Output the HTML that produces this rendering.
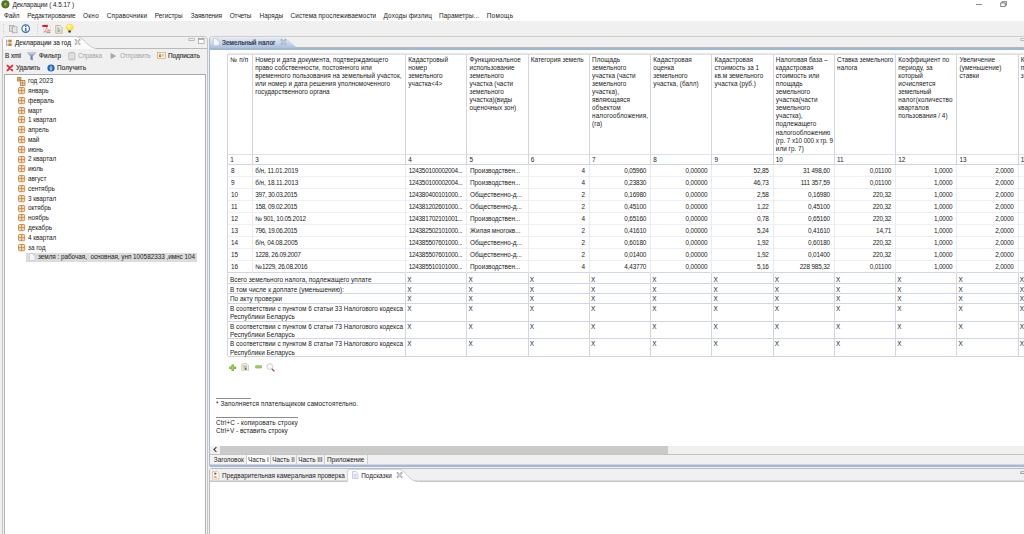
<!DOCTYPE html>
<html><head><meta charset="utf-8"><title>Декларации</title>
<style>
html,body{margin:0;padding:0;width:1024px;height:534px;overflow:hidden;background:#f0f0f0;}
#app{position:relative;width:1024px;height:534px;overflow:hidden;background:#f0f0f0;
 font-family:"Liberation Sans",sans-serif;font-size:6.4px;color:#222;}
.b{position:absolute;box-sizing:border-box;}
.t{position:absolute;white-space:pre;height:10px;line-height:10px;}
.bold{font-weight:bold;}
.dis{color:#a6a6a6;}
</style></head><body><div id="app">

<div class="b " style="left:0px;top:0px;width:1024px;height:21px;background:#fff;"></div>
<svg class="b" style="left:1px;top:0px" width="9" height="9" viewBox="0 0 9 9"><circle cx="4.4" cy="4.35" r="4.05" fill="#6e5424"/><circle cx="4.4" cy="4.3" r="3.45" fill="#2f8a30"/><path d="M3.1 2.9h2.6v2.2l-1.3 1.7l-1.3-1.7z" fill="#e8741c"/><circle cx="4.4" cy="4.1" r="0.75" fill="#dcc428"/><path d="M3.7 5.2h1.4l-.7 1.1z" fill="#e6401c"/></svg>
<div class="t" style="left:12.40px;top:0.00px;letter-spacing:-0.075px;">Декларации ( 4.5.17 )</div>
<div class="b " style="left:976.4px;top:3.5px;width:5.8px;height:0.8px;background:#8a8a8a;"></div>
<svg class="b" style="left:1000.4px;top:1.2px" width="8" height="7" viewBox="0 0 8 7"><path d="M0.7 1.9h4.5v3.6h-4.5z M1.9 1.9v-1.2h4.5v3.6h-1.2" fill="none" stroke="#555" stroke-width="0.7"/></svg>
<div class="t" style="left:4.00px;top:11.00px;letter-spacing:-0.106px;">Файл</div>
<div class="t" style="left:27.25px;top:11.00px;letter-spacing:-0.022px;">Редактирование</div>
<div class="t" style="left:83.10px;top:11.00px;letter-spacing:0.247px;">Окно</div>
<div class="t" style="left:106.75px;top:11.00px;letter-spacing:0.153px;">Справочники</div>
<div class="t" style="left:154.75px;top:11.00px;letter-spacing:0.004px;">Регистры</div>
<div class="t" style="left:190.75px;top:11.00px;letter-spacing:-0.090px;">Заявления</div>
<div class="t" style="left:229.75px;top:11.00px;letter-spacing:-0.119px;">Отчеты</div>
<div class="t" style="left:259.60px;top:11.00px;letter-spacing:0.033px;">Наряды</div>
<div class="t" style="left:290.60px;top:11.00px;letter-spacing:0.052px;">Система прослеживаемости</div>
<div class="t" style="left:383.60px;top:11.00px;letter-spacing:0.094px;">Доходы физлиц</div>
<div class="t" style="left:439.10px;top:11.00px;letter-spacing:0.045px;">Параметры...</div>
<div class="t" style="left:486.70px;top:11.00px;letter-spacing:0.323px;">Помощь</div>
<div class="b " style="left:3px;top:23.6px;width:0.9px;height:0.9px;background:#cfcfcf;"></div>
<div class="b " style="left:3px;top:25.900000000000002px;width:0.9px;height:0.9px;background:#cfcfcf;"></div>
<div class="b " style="left:3px;top:28.200000000000003px;width:0.9px;height:0.9px;background:#cfcfcf;"></div>
<div class="b " style="left:3px;top:30.5px;width:0.9px;height:0.9px;background:#cfcfcf;"></div>
<div class="b " style="left:3px;top:32.8px;width:0.9px;height:0.9px;background:#cfcfcf;"></div>
<div class="b " style="left:36.5px;top:23.6px;width:0.9px;height:0.9px;background:#cfcfcf;"></div>
<div class="b " style="left:36.5px;top:25.900000000000002px;width:0.9px;height:0.9px;background:#cfcfcf;"></div>
<div class="b " style="left:36.5px;top:28.200000000000003px;width:0.9px;height:0.9px;background:#cfcfcf;"></div>
<div class="b " style="left:36.5px;top:30.5px;width:0.9px;height:0.9px;background:#cfcfcf;"></div>
<div class="b " style="left:36.5px;top:32.8px;width:0.9px;height:0.9px;background:#cfcfcf;"></div>
<svg class="b" style="left:9px;top:24px" width="9" height="10" viewBox="0 0 9 10"><rect x="0.5" y="1.5" width="4.5" height="6" fill="#d9d9d9" stroke="#9a9a9a" stroke-width="0.6"/><rect x="3.5" y="2.8" width="4.5" height="6" fill="#e6e6e6" stroke="#9a9a9a" stroke-width="0.6"/></svg>
<svg class="b" style="left:20.9px;top:24.1px" width="9.4" height="9.4" viewBox="0 0 9.4 9.4"><circle cx="4.7" cy="4.6" r="3.75" fill="#fff" stroke="#2e6eb5" stroke-width="1.15"/><path d="M3.9 3.9h1.5v2.9h0.6v0.5h-2.4v-0.5h0.7v-2.3h-0.6z" fill="#1d4f93"/><rect x="4.1" y="2" width="1.3" height="1.2" fill="#1d4f93"/></svg>
<svg class="b" style="left:41.5px;top:24px" width="9" height="10" viewBox="0 0 9 10"><path d="M2 0.7h4.4l1.9 1.9v6.3h-6.3z" fill="#fbfbfb" stroke="#bdbdbd" stroke-width="0.5"/><rect x="4.6" y="7.6" width="3.7" height="1.3" fill="#9a9a9a"/><rect x="0.3" y="1.1" width="5.6" height="1.9" rx="0.3" fill="#dc1f26"/><path d="M2.4 8c1.4-2 2.3-3.4 2.2-4.6 .9 2 1.9 2.8 3.2 3.1-2 .1-3.6.5-5.4 1.5z" fill="none" stroke="#e0444a" stroke-width="0.55"/></svg>
<svg class="b" style="left:54.6px;top:24.5px" width="8" height="9" viewBox="0 0 8 9"><path d="M0.8 0.6h4.2l2 2v5.6h-6.2z" fill="#f7f3e6" stroke="#b39c6c" stroke-width="0.75"/><rect x="2.2" y="2.6" width="2" height="0.8" fill="#d05a5a"/><rect x="2.2" y="3.8" width="3.2" height="0.8" fill="#7fa6dc"/><rect x="2.2" y="5" width="3.2" height="0.8" fill="#7fc08a"/><rect x="2.2" y="6.2" width="3.2" height="0.8" fill="#7fa6dc"/></svg>
<svg class="b" style="left:65px;top:23.4px" width="9.4" height="10" viewBox="0 0 9.4 10"><path d="M4.6 0.3l1 1.2 1.6-.5 .1 1.6 1.6.5-.9 1.4.9 1.3-1.6.6-.3 1.3h-4.6l-.4-1.3-1.6-.6.9-1.3-.9-1.4 1.6-.5.1-1.6 1.6.5z" fill="#f8dc3c"/><circle cx="4.5" cy="3.9" r="2.7" fill="#ffe94e"/><circle cx="4" cy="3.2" r="1.3" fill="#fff9b8"/><rect x="3.3" y="7.4" width="2.6" height="2.2" rx="0.4" fill="#2e3550"/></svg>
<div class="b " style="left:2px;top:35.5px;width:205.8px;height:502.5px;border:1.1px solid #c4c4c4;border-radius:4px 4px 0 0;background:#f0f0f0;"></div>
<svg class="b" style="left:3.1px;top:36.6px" width="100" height="12" viewBox="0 0 100 12"><path d="M0 12V3Q0 0 3 0H74.5C81 0 85 11.6 95 11.6L100 12Z" fill="#fcfcfc"/><path d="M74.5 0C81 0 85 11.8 95 11.8" fill="none" stroke="#bdbdbd" stroke-width="0.8"/></svg>
<div class="b " style="left:96px;top:48.1px;width:111px;height:0.8px;background:#b9b9b9;"></div>
<svg class="b" style="left:6px;top:38.6px" width="6" height="8" viewBox="0 0 6 8"><path d="M0.7 0.5v7" stroke="#7f93b0" stroke-width="0.8"/><path d="M0.7 2.2h2M0.7 5.6h2" stroke="#7f93b0" stroke-width="0.5"/><rect x="2.4" y="0.7" width="3.2" height="2.7" fill="#c67f34"/><rect x="2.4" y="4.3" width="3.2" height="2.7" fill="#c67f34"/></svg>
<div class="t" style="left:15.00px;top:38.00px;letter-spacing:0.043px;color:#333;-webkit-text-stroke:0.12px #333;">Декларации за год</div>
<svg class="b" style="left:74.1px;top:38.3px" width="7.4" height="7.4" viewBox="0 0 7.4 7.4"><path d="M1.6 2L5.6 6M5.6 2L1.6 6" stroke="#979797" stroke-width="1.7" stroke-linecap="square" fill="none"/><path d="M1.6 2L5.6 6M5.6 2L1.6 6" stroke="#fdfdfd" stroke-width="0.8" stroke-linecap="square" fill="none"/></svg>
<svg class="b" style="left:187.5px;top:37.8px" width="8" height="4" viewBox="0 0 8 4"><rect x="0.8" y="0.8" width="5.4" height="1.8" fill="#fff" stroke="#8c8c8c" stroke-width="0.6"/></svg>
<svg class="b" style="left:197.5px;top:38px" width="8" height="7" viewBox="0 0 8 7"><rect x="0.6" y="0.6" width="5.4" height="4.8" fill="#fff" stroke="#8c8c8c" stroke-width="0.6"/><path d="M0.6 1.2h5.4" stroke="#8c8c8c" stroke-width="0.9"/></svg>
<div class="t" style="left:5.00px;top:51.00px;color:#3a3a3a;-webkit-text-stroke:0.18px #3a3a3a;">B xml</div>
<svg class="b" style="left:27.4px;top:51.8px" width="9.4" height="9" viewBox="0 0 9.4 9"><defs><linearGradient id="gf" x1="0" y1="0" x2="0" y2="1"><stop offset="0" stop-color="#b4c8ec"/><stop offset="0.5" stop-color="#7f93bd"/><stop offset="1" stop-color="#56648a"/></linearGradient></defs><path d="M0.5 0.7h8.2l-3.2 3.5v3.9l-1.8-.8v-3.1z" fill="url(#gf)" stroke="#6e82ad" stroke-width="0.45"/><path d="M1.6 1.3h6" stroke="#dde7f8" stroke-width="0.6"/></svg>
<div class="t" style="left:39.00px;top:51.00px;letter-spacing:0.106px;color:#3a3a3a;-webkit-text-stroke:0.18px #3a3a3a;">Фильтр</div>
<svg class="b" style="left:67.5px;top:51.2px" width="8" height="10" viewBox="0 0 8 10"><rect x="0.8" y="1.8" width="6" height="7" rx="0.6" fill="#e9e9e9" stroke="#a6a6a6" stroke-width="0.75"/><rect x="2.6" y="0.8" width="2.6" height="1.8" fill="#c4c4c4"/><path d="M2.4 4.5h3M2.4 6h3M2.4 7.4h3" stroke="#c0c0c0" stroke-width="0.5"/></svg>
<div class="t dis" style="left:78.00px;top:51.00px;letter-spacing:-0.180px;">Справка</div>
<svg class="b" style="left:110px;top:52px" width="7" height="8" viewBox="0 0 7 8"><path d="M0.6 0.8L6.2 4L0.6 7.2Z" fill="#a9a9a9"/></svg>
<div class="t dis" style="left:120.00px;top:51.00px;letter-spacing:-0.138px;">Отправить</div>
<svg class="b" style="left:157px;top:52px" width="9" height="7" viewBox="0 0 9 7"><rect x="0.5" y="0.5" width="7.8" height="5.8" fill="#fdf5d8" stroke="#b9a067" stroke-width="0.6"/><rect x="2.2" y="1.6" width="1.6" height="2" fill="#f0a020"/><rect x="2.2" y="3.4" width="1.6" height="1.6" fill="#d02020"/><rect x="4.6" y="2" width="2.6" height="2.6" fill="#b9cdee"/></svg>
<div class="t" style="left:168.00px;top:51.00px;letter-spacing:0.020px;color:#3a3a3a;-webkit-text-stroke:0.18px #3a3a3a;">Подписать</div>
<svg class="b" style="left:5.6px;top:63.9px" width="8" height="8" viewBox="0 0 8 8"><path d="M1.5 1.6L6.3 6.4M6.3 1.6L1.5 6.4" stroke="#e0323e" stroke-width="2" stroke-linecap="round"/></svg>
<div class="t" style="left:16.00px;top:63.00px;letter-spacing:-0.068px;color:#3a3a3a;-webkit-text-stroke:0.18px #3a3a3a;">Удалить</div>
<svg class="b" style="left:46.5px;top:64px" width="8" height="8" viewBox="0 0 8 8"><circle cx="4" cy="4" r="3.6" fill="#1660b6"/><circle cx="4" cy="3.4" r="2.5" fill="#2272c8"/><path d="M4 1.9v2.4M3 3.6L4 4.8L5 3.6M2.7 5.9h2.6" stroke="#fff" stroke-width="0.75" fill="none"/></svg>
<div class="t" style="left:57.00px;top:63.00px;letter-spacing:0.129px;color:#3a3a3a;-webkit-text-stroke:0.18px #3a3a3a;">Получить</div>
<div class="b " style="left:4px;top:74.2px;width:202.2px;height:470px;background:#fff;border:1px solid #b4b4b4;border-top:1.3px solid #a9a9a9;"></div>
<svg class="b" style="left:17px;top:76.5px" width="9" height="9" viewBox="0 0 9 9"><rect x="0.4" y="0.4" width="3.6" height="3.6" fill="#f0c896" stroke="#b06a2c" stroke-width="0.6"/><path d="M2.2 0.4v3.6M0.4 2.2h3.6" stroke="#b06a2c" stroke-width="0.5"/><rect x="3.2" y="3.6" width="4.8" height="4.8" fill="#f6d9b4" stroke="#b06a2c" stroke-width="0.7"/><path d="M5.6 3.6v4.8M3.2 6h4.8" stroke="#b06a2c" stroke-width="0.6"/></svg>
<div class="t" style="left:28.00px;top:76.00px;letter-spacing:-0.040px;">год 2023</div>
<svg class="b" style="left:18px;top:87.086px" width="8" height="8" viewBox="0 0 8 8"><rect x="0.5" y="0.5" width="6.2" height="6.2" rx="1" fill="#f6d9b4" stroke="#c07a36" stroke-width="0.8"/><path d="M3.6 0.5v6.2M0.5 3.6h6.2" stroke="#c07a36" stroke-width="0.7"/></svg>
<div class="t" style="left:28.00px;top:86.00px;letter-spacing:-0.040px;">январь</div>
<svg class="b" style="left:18px;top:96.872px" width="8" height="8" viewBox="0 0 8 8"><rect x="0.5" y="0.5" width="6.2" height="6.2" rx="1" fill="#f6d9b4" stroke="#c07a36" stroke-width="0.8"/><path d="M3.6 0.5v6.2M0.5 3.6h6.2" stroke="#c07a36" stroke-width="0.7"/></svg>
<div class="t" style="left:28.00px;top:96.00px;letter-spacing:-0.040px;">февраль</div>
<svg class="b" style="left:18px;top:106.658px" width="8" height="8" viewBox="0 0 8 8"><rect x="0.5" y="0.5" width="6.2" height="6.2" rx="1" fill="#f6d9b4" stroke="#c07a36" stroke-width="0.8"/><path d="M3.6 0.5v6.2M0.5 3.6h6.2" stroke="#c07a36" stroke-width="0.7"/></svg>
<div class="t" style="left:28.00px;top:106.00px;letter-spacing:-0.040px;">март</div>
<svg class="b" style="left:18px;top:116.444px" width="8" height="8" viewBox="0 0 8 8"><rect x="0.5" y="0.5" width="6.2" height="6.2" rx="1" fill="#f6d9b4" stroke="#c07a36" stroke-width="0.8"/><path d="M3.6 0.5v6.2M0.5 3.6h6.2" stroke="#c07a36" stroke-width="0.7"/></svg>
<div class="t" style="left:28.00px;top:115.00px;letter-spacing:-0.040px;">1 квартал</div>
<svg class="b" style="left:18px;top:126.23px" width="8" height="8" viewBox="0 0 8 8"><rect x="0.5" y="0.5" width="6.2" height="6.2" rx="1" fill="#f6d9b4" stroke="#c07a36" stroke-width="0.8"/><path d="M3.6 0.5v6.2M0.5 3.6h6.2" stroke="#c07a36" stroke-width="0.7"/></svg>
<div class="t" style="left:28.00px;top:125.00px;letter-spacing:-0.040px;">апрель</div>
<svg class="b" style="left:18px;top:136.01599999999996px" width="8" height="8" viewBox="0 0 8 8"><rect x="0.5" y="0.5" width="6.2" height="6.2" rx="1" fill="#f6d9b4" stroke="#c07a36" stroke-width="0.8"/><path d="M3.6 0.5v6.2M0.5 3.6h6.2" stroke="#c07a36" stroke-width="0.7"/></svg>
<div class="t" style="left:28.00px;top:135.00px;letter-spacing:-0.040px;">май</div>
<svg class="b" style="left:18px;top:145.80199999999996px" width="8" height="8" viewBox="0 0 8 8"><rect x="0.5" y="0.5" width="6.2" height="6.2" rx="1" fill="#f6d9b4" stroke="#c07a36" stroke-width="0.8"/><path d="M3.6 0.5v6.2M0.5 3.6h6.2" stroke="#c07a36" stroke-width="0.7"/></svg>
<div class="t" style="left:28.00px;top:145.00px;letter-spacing:-0.040px;">июнь</div>
<svg class="b" style="left:18px;top:155.58799999999997px" width="8" height="8" viewBox="0 0 8 8"><rect x="0.5" y="0.5" width="6.2" height="6.2" rx="1" fill="#f6d9b4" stroke="#c07a36" stroke-width="0.8"/><path d="M3.6 0.5v6.2M0.5 3.6h6.2" stroke="#c07a36" stroke-width="0.7"/></svg>
<div class="t" style="left:28.00px;top:154.00px;letter-spacing:-0.040px;">2 квартал</div>
<svg class="b" style="left:18px;top:165.37399999999997px" width="8" height="8" viewBox="0 0 8 8"><rect x="0.5" y="0.5" width="6.2" height="6.2" rx="1" fill="#f6d9b4" stroke="#c07a36" stroke-width="0.8"/><path d="M3.6 0.5v6.2M0.5 3.6h6.2" stroke="#c07a36" stroke-width="0.7"/></svg>
<div class="t" style="left:28.00px;top:164.00px;letter-spacing:-0.040px;">июль</div>
<svg class="b" style="left:18px;top:175.15999999999997px" width="8" height="8" viewBox="0 0 8 8"><rect x="0.5" y="0.5" width="6.2" height="6.2" rx="1" fill="#f6d9b4" stroke="#c07a36" stroke-width="0.8"/><path d="M3.6 0.5v6.2M0.5 3.6h6.2" stroke="#c07a36" stroke-width="0.7"/></svg>
<div class="t" style="left:28.00px;top:174.00px;letter-spacing:-0.040px;">август</div>
<svg class="b" style="left:18px;top:184.94599999999997px" width="8" height="8" viewBox="0 0 8 8"><rect x="0.5" y="0.5" width="6.2" height="6.2" rx="1" fill="#f6d9b4" stroke="#c07a36" stroke-width="0.8"/><path d="M3.6 0.5v6.2M0.5 3.6h6.2" stroke="#c07a36" stroke-width="0.7"/></svg>
<div class="t" style="left:28.00px;top:184.00px;letter-spacing:-0.040px;">сентябрь</div>
<svg class="b" style="left:18px;top:194.73199999999997px" width="8" height="8" viewBox="0 0 8 8"><rect x="0.5" y="0.5" width="6.2" height="6.2" rx="1" fill="#f6d9b4" stroke="#c07a36" stroke-width="0.8"/><path d="M3.6 0.5v6.2M0.5 3.6h6.2" stroke="#c07a36" stroke-width="0.7"/></svg>
<div class="t" style="left:28.00px;top:194.00px;letter-spacing:-0.040px;">3 квартал</div>
<svg class="b" style="left:18px;top:204.51799999999997px" width="8" height="8" viewBox="0 0 8 8"><rect x="0.5" y="0.5" width="6.2" height="6.2" rx="1" fill="#f6d9b4" stroke="#c07a36" stroke-width="0.8"/><path d="M3.6 0.5v6.2M0.5 3.6h6.2" stroke="#c07a36" stroke-width="0.7"/></svg>
<div class="t" style="left:28.00px;top:203.00px;letter-spacing:-0.040px;">октябрь</div>
<svg class="b" style="left:18px;top:214.30399999999997px" width="8" height="8" viewBox="0 0 8 8"><rect x="0.5" y="0.5" width="6.2" height="6.2" rx="1" fill="#f6d9b4" stroke="#c07a36" stroke-width="0.8"/><path d="M3.6 0.5v6.2M0.5 3.6h6.2" stroke="#c07a36" stroke-width="0.7"/></svg>
<div class="t" style="left:28.00px;top:213.00px;letter-spacing:-0.040px;">ноябрь</div>
<svg class="b" style="left:18px;top:224.08999999999997px" width="8" height="8" viewBox="0 0 8 8"><rect x="0.5" y="0.5" width="6.2" height="6.2" rx="1" fill="#f6d9b4" stroke="#c07a36" stroke-width="0.8"/><path d="M3.6 0.5v6.2M0.5 3.6h6.2" stroke="#c07a36" stroke-width="0.7"/></svg>
<div class="t" style="left:28.00px;top:223.00px;letter-spacing:-0.040px;">декабрь</div>
<svg class="b" style="left:18px;top:233.87599999999998px" width="8" height="8" viewBox="0 0 8 8"><rect x="0.5" y="0.5" width="6.2" height="6.2" rx="1" fill="#f6d9b4" stroke="#c07a36" stroke-width="0.8"/><path d="M3.6 0.5v6.2M0.5 3.6h6.2" stroke="#c07a36" stroke-width="0.7"/></svg>
<div class="t" style="left:28.00px;top:233.00px;letter-spacing:-0.040px;">4 квартал</div>
<svg class="b" style="left:18px;top:243.66199999999998px" width="8" height="8" viewBox="0 0 8 8"><rect x="0.5" y="0.5" width="6.2" height="6.2" rx="1" fill="#f6d9b4" stroke="#c07a36" stroke-width="0.8"/><path d="M3.6 0.5v6.2M0.5 3.6h6.2" stroke="#c07a36" stroke-width="0.7"/></svg>
<div class="t" style="left:28.00px;top:243.00px;letter-spacing:-0.040px;">за год</div>
<div class="b " style="left:26px;top:252.748px;width:170.5px;height:9px;background:#dcdcdc;"></div>
<svg class="b" style="left:28.5px;top:253.44799999999998px" width="7" height="8" viewBox="0 0 7 8"><path d="M0.5 0.5h3.6l1.9 1.9v5.1h-5.5z" fill="#f4f6fb" stroke="#b8c4dc" stroke-width="0.6"/><path d="M4.1 0.5v1.9h1.9" fill="#dce6f5" stroke="#b8c4dc" stroke-width="0.4"/></svg>
<div class="t" style="left:38.00px;top:252.00px;letter-spacing:-0.043px;">земля : рабочая,  основная, унп 100582333 ,имнс 104</div>
<div class="b " style="left:209px;top:35.5px;width:830px;height:430.7px;border:1px solid #a9b9d0;border-top:1.2px solid #cfcfcf;border-radius:4px 0 0 0;background:#fff;"></div>
<div class="b " style="left:210px;top:36.7px;width:830px;height:11.3px;background:#f0f0f0;border-radius:3px 0 0 0;border-bottom:0.5px solid #b8b8b8;"></div>
<svg class="b" style="left:210px;top:36.5px" width="100" height="13.4" viewBox="0 0 100 13.4"><defs><linearGradient id="g1" x1="0" y1="0" x2="0" y2="1"><stop offset="0" stop-color="#e6edf6"/><stop offset="0.45" stop-color="#c9d7ea"/><stop offset="1" stop-color="#9ab4d5"/></linearGradient></defs><path d="M0 13.4V3Q0 0 3 0H72.5C79 0 83 12 93 12H100V13.4Z" fill="url(#g1)"/></svg>
<div class="b " style="left:210px;top:48.3px;width:830px;height:1.55px;background:#9db7d7;"></div>
<svg class="b" style="left:212.8px;top:38.4px" width="7" height="8" viewBox="0 0 7 8"><path d="M0.5 0.5h3.6l1.9 1.9v5.1h-5.5z" fill="#f3f6fb" stroke="#b9c6dc" stroke-width="0.6"/><path d="M4.1 0.5v1.9h1.9z" fill="#f2e2a8" stroke="#c9bf94" stroke-width="0.4"/></svg>
<div class="t" style="left:222.00px;top:38.00px;letter-spacing:0.068px;color:#2f3440;-webkit-text-stroke:0.2px #2f3440;">Земельный налог</div>
<svg class="b" style="left:279.5px;top:38.4px" width="7.4" height="7.4" viewBox="0 0 7.4 7.4"><path d="M1.6 2L5.6 6M5.6 2L1.6 6" stroke="#8a94a4" stroke-width="1.7" stroke-linecap="square" fill="none"/><path d="M1.6 2L5.6 6M5.6 2L1.6 6" stroke="#f4f7fb" stroke-width="0.8" stroke-linecap="square" fill="none"/></svg>
<svg class="b" style="left:1020.2px;top:37.8px" width="8" height="4" viewBox="0 0 8 4"><rect x="0.8" y="0.8" width="5.4" height="1.8" fill="#fff" stroke="#8c8c8c" stroke-width="0.6"/></svg>
<div class="b " style="left:227.5px;top:53.1px;width:800px;height:1.6px;background:#e0e4eb;"></div>
<div class="b " style="left:227.5px;top:154.3px;width:800px;height:1.0px;background:#dde2ea;"></div>
<div class="b " style="left:227.5px;top:164.0px;width:800px;height:1.0px;background:#d0d6e3;"></div>
<div class="b " style="left:227.5px;top:176.0px;width:800px;height:1.0px;background:#eef0f5;"></div>
<div class="b " style="left:227.5px;top:188.0px;width:800px;height:1.0px;background:#eef0f5;"></div>
<div class="b " style="left:227.5px;top:200.0px;width:800px;height:1.0px;background:#eef0f5;"></div>
<div class="b " style="left:227.5px;top:212.0px;width:800px;height:1.0px;background:#eef0f5;"></div>
<div class="b " style="left:227.5px;top:224.0px;width:800px;height:1.0px;background:#eef0f5;"></div>
<div class="b " style="left:227.5px;top:236.0px;width:800px;height:1.0px;background:#eef0f5;"></div>
<div class="b " style="left:227.5px;top:248.0px;width:800px;height:1.0px;background:#eef0f5;"></div>
<div class="b " style="left:227.5px;top:260.0px;width:800px;height:1.0px;background:#eef0f5;"></div>
<div class="b " style="left:227.5px;top:272.0px;width:800px;height:1.0px;background:#d0d6e3;"></div>
<div class="b " style="left:227.5px;top:282.9px;width:800px;height:1.0px;background:#d0d6e3;"></div>
<div class="b " style="left:227.5px;top:292.9px;width:800px;height:1.0px;background:#d0d6e3;"></div>
<div class="b " style="left:227.5px;top:302.9px;width:800px;height:1.0px;background:#d0d6e3;"></div>
<div class="b " style="left:227.5px;top:320.6px;width:800px;height:1.0px;background:#d0d6e3;"></div>
<div class="b " style="left:227.5px;top:338.2px;width:800px;height:1.0px;background:#d0d6e3;"></div>
<div class="b " style="left:227.5px;top:355.9px;width:800px;height:1.0px;background:#d0d6e3;"></div>
<div class="b " style="left:227.0px;top:53.5px;width:1.0px;height:302.9px;background:#d0d6e3;"></div>
<div class="b " style="left:252.0px;top:53.5px;width:1.0px;height:111.0px;background:#d0d6e3;"></div>
<div class="b " style="left:252.0px;top:164.5px;width:1.0px;height:108.0px;background:#e9ecf2;"></div>
<div class="b " style="left:405.1px;top:53.5px;width:1.0px;height:111.0px;background:#d0d6e3;"></div>
<div class="b " style="left:405.1px;top:164.5px;width:1.0px;height:108.0px;background:#e9ecf2;"></div>
<div class="b " style="left:405.1px;top:272.5px;width:1.0px;height:83.89999999999998px;background:#d0d6e3;"></div>
<div class="b " style="left:466.4px;top:53.5px;width:1.0px;height:111.0px;background:#d0d6e3;"></div>
<div class="b " style="left:466.4px;top:164.5px;width:1.0px;height:108.0px;background:#e9ecf2;"></div>
<div class="b " style="left:466.4px;top:272.5px;width:1.0px;height:83.89999999999998px;background:#d0d6e3;"></div>
<div class="b " style="left:527.6px;top:53.5px;width:1.0px;height:111.0px;background:#d0d6e3;"></div>
<div class="b " style="left:527.6px;top:164.5px;width:1.0px;height:108.0px;background:#e9ecf2;"></div>
<div class="b " style="left:527.6px;top:272.5px;width:1.0px;height:83.89999999999998px;background:#d0d6e3;"></div>
<div class="b " style="left:588.9px;top:53.5px;width:1.0px;height:111.0px;background:#d0d6e3;"></div>
<div class="b " style="left:588.9px;top:164.5px;width:1.0px;height:108.0px;background:#e9ecf2;"></div>
<div class="b " style="left:588.9px;top:272.5px;width:1.0px;height:83.89999999999998px;background:#d0d6e3;"></div>
<div class="b " style="left:650.1px;top:53.5px;width:1.0px;height:111.0px;background:#d0d6e3;"></div>
<div class="b " style="left:650.1px;top:164.5px;width:1.0px;height:108.0px;background:#e9ecf2;"></div>
<div class="b " style="left:650.1px;top:272.5px;width:1.0px;height:83.89999999999998px;background:#d0d6e3;"></div>
<div class="b " style="left:711.4px;top:53.5px;width:1.0px;height:111.0px;background:#d0d6e3;"></div>
<div class="b " style="left:711.4px;top:164.5px;width:1.0px;height:108.0px;background:#e9ecf2;"></div>
<div class="b " style="left:711.4px;top:272.5px;width:1.0px;height:83.89999999999998px;background:#d0d6e3;"></div>
<div class="b " style="left:772.6px;top:53.5px;width:1.0px;height:111.0px;background:#d0d6e3;"></div>
<div class="b " style="left:772.6px;top:164.5px;width:1.0px;height:108.0px;background:#e9ecf2;"></div>
<div class="b " style="left:772.6px;top:272.5px;width:1.0px;height:83.89999999999998px;background:#d0d6e3;"></div>
<div class="b " style="left:833.9px;top:53.5px;width:1.0px;height:111.0px;background:#d0d6e3;"></div>
<div class="b " style="left:833.9px;top:164.5px;width:1.0px;height:108.0px;background:#e9ecf2;"></div>
<div class="b " style="left:833.9px;top:272.5px;width:1.0px;height:83.89999999999998px;background:#d0d6e3;"></div>
<div class="b " style="left:895.1px;top:53.5px;width:1.0px;height:111.0px;background:#d0d6e3;"></div>
<div class="b " style="left:895.1px;top:164.5px;width:1.0px;height:108.0px;background:#e9ecf2;"></div>
<div class="b " style="left:895.1px;top:272.5px;width:1.0px;height:83.89999999999998px;background:#d0d6e3;"></div>
<div class="b " style="left:956.4px;top:53.5px;width:1.0px;height:111.0px;background:#d0d6e3;"></div>
<div class="b " style="left:956.4px;top:164.5px;width:1.0px;height:108.0px;background:#e9ecf2;"></div>
<div class="b " style="left:956.4px;top:272.5px;width:1.0px;height:83.89999999999998px;background:#d0d6e3;"></div>
<div class="b " style="left:1017.6px;top:53.5px;width:1.0px;height:111.0px;background:#d0d6e3;"></div>
<div class="b " style="left:1017.6px;top:164.5px;width:1.0px;height:108.0px;background:#e9ecf2;"></div>
<div class="b " style="left:1017.6px;top:272.5px;width:1.0px;height:83.89999999999998px;background:#d0d6e3;"></div>
<div class="t" style="left:230.20px;top:55.00px;letter-spacing:0.168px;">№ п/п</div>
<div class="t" style="left:255.20px;top:55.00px;letter-spacing:0.036px;">Номер и дата документа, подтверждающего</div>
<div class="t" style="left:255.20px;top:63.00px;letter-spacing:0.030px;">право собственности, постоянного или</div>
<div class="t" style="left:255.20px;top:71.00px;letter-spacing:0.057px;">временного пользования на земельный участок,</div>
<div class="t" style="left:255.20px;top:79.00px;letter-spacing:0.030px;">или номер и дата решения уполномоченного</div>
<div class="t" style="left:255.20px;top:87.00px;letter-spacing:0.030px;">государственного органа</div>
<div class="t" style="left:408.30px;top:55.00px;letter-spacing:0.030px;">Кадастровый</div>
<div class="t" style="left:408.30px;top:63.00px;letter-spacing:0.030px;">номер</div>
<div class="t" style="left:408.30px;top:71.00px;letter-spacing:0.030px;">земельного</div>
<div class="t" style="left:408.30px;top:79.00px;letter-spacing:0.030px;">участка&lt;4&gt;</div>
<div class="t" style="left:469.60px;top:55.00px;letter-spacing:0.104px;">Функциональное</div>
<div class="t" style="left:469.60px;top:63.00px;letter-spacing:0.030px;">использование</div>
<div class="t" style="left:469.60px;top:71.00px;letter-spacing:0.030px;">земельного</div>
<div class="t" style="left:469.60px;top:79.00px;letter-spacing:0.030px;">участка (части</div>
<div class="t" style="left:469.60px;top:87.00px;letter-spacing:0.030px;">земельного</div>
<div class="t" style="left:469.60px;top:95.00px;letter-spacing:0.030px;">участка)(виды</div>
<div class="t" style="left:469.60px;top:103.00px;letter-spacing:0.030px;">оценочных зон)</div>
<div class="t" style="left:530.80px;top:55.00px;">Категория земель</div>
<div class="t" style="left:592.10px;top:55.00px;letter-spacing:0.030px;">Площадь</div>
<div class="t" style="left:592.10px;top:63.00px;letter-spacing:0.030px;">земельного</div>
<div class="t" style="left:592.10px;top:71.00px;letter-spacing:0.030px;">участка (части</div>
<div class="t" style="left:592.10px;top:79.00px;letter-spacing:0.030px;">земельного</div>
<div class="t" style="left:592.10px;top:87.00px;letter-spacing:0.030px;">участка),</div>
<div class="t" style="left:592.10px;top:95.00px;letter-spacing:0.030px;">являющаяся</div>
<div class="t" style="left:592.10px;top:103.00px;letter-spacing:0.030px;">объектом</div>
<div class="t" style="left:592.10px;top:111.00px;letter-spacing:0.096px;">налогообложения,</div>
<div class="t" style="left:592.10px;top:119.00px;letter-spacing:0.030px;">(га)</div>
<div class="t" style="left:653.30px;top:55.00px;letter-spacing:0.030px;">Кадастровая</div>
<div class="t" style="left:653.30px;top:63.00px;letter-spacing:0.030px;">оценка</div>
<div class="t" style="left:653.30px;top:71.00px;letter-spacing:0.030px;">земельного</div>
<div class="t" style="left:653.30px;top:79.00px;letter-spacing:0.030px;">участка, (балл)</div>
<div class="t" style="left:714.60px;top:55.00px;letter-spacing:0.030px;">Кадастровая</div>
<div class="t" style="left:714.60px;top:63.00px;letter-spacing:0.030px;">стоимость за 1</div>
<div class="t" style="left:714.60px;top:71.00px;letter-spacing:0.030px;">кв.м земельного</div>
<div class="t" style="left:714.60px;top:79.00px;letter-spacing:0.030px;">участка (руб.)</div>
<div class="t" style="left:775.80px;top:55.00px;letter-spacing:-0.030px;">Налоговая база –</div>
<div class="t" style="left:775.80px;top:63.00px;letter-spacing:0.030px;">кадастровая</div>
<div class="t" style="left:775.80px;top:71.00px;letter-spacing:0.030px;">стоимость или</div>
<div class="t" style="left:775.80px;top:79.00px;letter-spacing:0.030px;">площадь</div>
<div class="t" style="left:775.80px;top:87.00px;letter-spacing:0.030px;">земельного</div>
<div class="t" style="left:775.80px;top:95.00px;letter-spacing:0.030px;">участка(части</div>
<div class="t" style="left:775.80px;top:103.00px;letter-spacing:0.030px;">земельного</div>
<div class="t" style="left:775.80px;top:111.00px;letter-spacing:0.030px;">участка),</div>
<div class="t" style="left:775.80px;top:119.00px;letter-spacing:0.030px;">подлежащего</div>
<div class="t" style="left:775.80px;top:128.00px;letter-spacing:0.030px;">налогообложению</div>
<div class="t" style="left:775.80px;top:136.00px;letter-spacing:-0.104px;">(гр. 7 х10 000 х гр. 9</div>
<div class="t" style="left:775.80px;top:144.00px;letter-spacing:0.030px;">или гр. 7)</div>
<div class="t" style="left:837.10px;top:55.00px;letter-spacing:-0.027px;">Ставка земельного</div>
<div class="t" style="left:837.10px;top:63.00px;letter-spacing:0.030px;">налога</div>
<div class="t" style="left:898.30px;top:55.00px;letter-spacing:0.030px;">Коэффициент по</div>
<div class="t" style="left:898.30px;top:63.00px;letter-spacing:0.030px;">периоду, за</div>
<div class="t" style="left:898.30px;top:71.00px;letter-spacing:0.030px;">который</div>
<div class="t" style="left:898.30px;top:79.00px;letter-spacing:0.030px;">исчисляется</div>
<div class="t" style="left:898.30px;top:87.00px;letter-spacing:0.030px;">земельный</div>
<div class="t" style="left:898.30px;top:95.00px;letter-spacing:0.122px;">налог(количество</div>
<div class="t" style="left:898.30px;top:103.00px;letter-spacing:0.030px;">кварталов</div>
<div class="t" style="left:898.30px;top:111.00px;letter-spacing:0.030px;">пользования / 4)</div>
<div class="t" style="left:959.60px;top:55.00px;letter-spacing:0.030px;">Увеличение</div>
<div class="t" style="left:959.60px;top:63.00px;letter-spacing:0.030px;">(уменьшение)</div>
<div class="t" style="left:959.60px;top:71.00px;letter-spacing:0.030px;">ставки</div>
<div class="t" style="left:1020.80px;top:55.00px;letter-spacing:0.030px;">К</div>
<div class="t" style="left:1020.80px;top:63.00px;letter-spacing:0.030px;">п</div>
<div class="t" style="left:1020.80px;top:71.00px;letter-spacing:0.030px;">з</div>
<div class="t" style="left:230.20px;top:155.00px;letter-spacing:-0.100px;">1</div>
<div class="t" style="left:255.20px;top:155.00px;letter-spacing:-0.100px;">3</div>
<div class="t" style="left:408.30px;top:155.00px;letter-spacing:-0.100px;">4</div>
<div class="t" style="left:469.60px;top:155.00px;letter-spacing:-0.100px;">5</div>
<div class="t" style="left:530.80px;top:155.00px;letter-spacing:-0.100px;">6</div>
<div class="t" style="left:592.10px;top:155.00px;letter-spacing:-0.100px;">7</div>
<div class="t" style="left:653.30px;top:155.00px;letter-spacing:-0.100px;">8</div>
<div class="t" style="left:714.60px;top:155.00px;letter-spacing:-0.100px;">9</div>
<div class="t" style="left:775.80px;top:155.00px;letter-spacing:-0.100px;">10</div>
<div class="t" style="left:837.10px;top:155.00px;letter-spacing:-0.100px;">11</div>
<div class="t" style="left:898.30px;top:155.00px;letter-spacing:-0.100px;">12</div>
<div class="t" style="left:959.60px;top:155.00px;letter-spacing:-0.100px;">13</div>
<div class="t" style="left:1020.80px;top:155.00px;letter-spacing:-0.100px;">1</div>
<div class="t" style="left:231.00px;top:166.00px;letter-spacing:-0.100px;">8</div>
<div class="t" style="left:255.30px;top:166.00px;letter-spacing:-0.081px;">б/н, 11.01.2019</div>
<div class="t" style="left:408.80px;top:166.00px;letter-spacing:-0.285px;">124350100002004...</div>
<div class="t" style="left:470.00px;top:166.00px;letter-spacing:-0.020px;">Производствен...</div>
<div class="t" style="left:528.10px;top:166.00px;width:56.90px;text-align:right;letter-spacing:-0.170px;">4</div>
<div class="t" style="left:589.40px;top:166.00px;width:56.80px;text-align:right;letter-spacing:-0.170px;">0,05960</div>
<div class="t" style="left:650.60px;top:166.00px;width:56.90px;text-align:right;letter-spacing:-0.170px;">0,00000</div>
<div class="t" style="left:711.90px;top:166.00px;width:56.80px;text-align:right;letter-spacing:-0.170px;">52,85</div>
<div class="t" style="left:773.10px;top:166.00px;width:56.90px;text-align:right;letter-spacing:-0.170px;">31 498,60</div>
<div class="t" style="left:834.40px;top:166.00px;width:56.80px;text-align:right;letter-spacing:-0.170px;">0,01100</div>
<div class="t" style="left:895.60px;top:166.00px;width:56.90px;text-align:right;letter-spacing:-0.170px;">1,0000</div>
<div class="t" style="left:956.90px;top:166.00px;width:56.80px;text-align:right;letter-spacing:-0.170px;">2,0000</div>
<div class="t" style="left:231.00px;top:178.00px;letter-spacing:-0.100px;">9</div>
<div class="t" style="left:255.30px;top:178.00px;letter-spacing:-0.081px;">б/н, 18.11.2013</div>
<div class="t" style="left:408.80px;top:178.00px;letter-spacing:-0.285px;">124350100002004...</div>
<div class="t" style="left:470.00px;top:178.00px;letter-spacing:-0.020px;">Производствен...</div>
<div class="t" style="left:528.10px;top:178.00px;width:56.90px;text-align:right;letter-spacing:-0.170px;">4</div>
<div class="t" style="left:589.40px;top:178.00px;width:56.80px;text-align:right;letter-spacing:-0.170px;">0,23830</div>
<div class="t" style="left:650.60px;top:178.00px;width:56.90px;text-align:right;letter-spacing:-0.170px;">0,00000</div>
<div class="t" style="left:711.90px;top:178.00px;width:56.80px;text-align:right;letter-spacing:-0.170px;">46,73</div>
<div class="t" style="left:773.10px;top:178.00px;width:56.90px;text-align:right;letter-spacing:-0.170px;">111 357,59</div>
<div class="t" style="left:834.40px;top:178.00px;width:56.80px;text-align:right;letter-spacing:-0.170px;">0,01100</div>
<div class="t" style="left:895.60px;top:178.00px;width:56.90px;text-align:right;letter-spacing:-0.170px;">1,0000</div>
<div class="t" style="left:956.90px;top:178.00px;width:56.80px;text-align:right;letter-spacing:-0.170px;">2,0000</div>
<div class="t" style="left:231.00px;top:190.00px;letter-spacing:-0.100px;">10</div>
<div class="t" style="left:255.30px;top:190.00px;letter-spacing:-0.307px;">397, 30.03.2015</div>
<div class="t" style="left:408.80px;top:190.00px;letter-spacing:-0.285px;">124380400101000...</div>
<div class="t" style="left:470.00px;top:190.00px;letter-spacing:-0.020px;">Общественно-д...</div>
<div class="t" style="left:528.10px;top:190.00px;width:56.90px;text-align:right;letter-spacing:-0.170px;">2</div>
<div class="t" style="left:589.40px;top:190.00px;width:56.80px;text-align:right;letter-spacing:-0.170px;">0,16980</div>
<div class="t" style="left:650.60px;top:190.00px;width:56.90px;text-align:right;letter-spacing:-0.170px;">0,00000</div>
<div class="t" style="left:711.90px;top:190.00px;width:56.80px;text-align:right;letter-spacing:-0.170px;">2,58</div>
<div class="t" style="left:773.10px;top:190.00px;width:56.90px;text-align:right;letter-spacing:-0.170px;">0,16980</div>
<div class="t" style="left:834.40px;top:190.00px;width:56.80px;text-align:right;letter-spacing:-0.170px;">220,32</div>
<div class="t" style="left:895.60px;top:190.00px;width:56.90px;text-align:right;letter-spacing:-0.170px;">1,0000</div>
<div class="t" style="left:956.90px;top:190.00px;width:56.80px;text-align:right;letter-spacing:-0.170px;">2,0000</div>
<div class="t" style="left:231.00px;top:202.00px;letter-spacing:-0.100px;">11</div>
<div class="t" style="left:255.30px;top:202.00px;letter-spacing:-0.300px;">158, 09.02.2015</div>
<div class="t" style="left:408.80px;top:202.00px;letter-spacing:-0.285px;">124381202601000...</div>
<div class="t" style="left:470.00px;top:202.00px;letter-spacing:-0.020px;">Общественно-д...</div>
<div class="t" style="left:528.10px;top:202.00px;width:56.90px;text-align:right;letter-spacing:-0.170px;">2</div>
<div class="t" style="left:589.40px;top:202.00px;width:56.80px;text-align:right;letter-spacing:-0.170px;">0,45100</div>
<div class="t" style="left:650.60px;top:202.00px;width:56.90px;text-align:right;letter-spacing:-0.170px;">0,00000</div>
<div class="t" style="left:711.90px;top:202.00px;width:56.80px;text-align:right;letter-spacing:-0.170px;">1,22</div>
<div class="t" style="left:773.10px;top:202.00px;width:56.90px;text-align:right;letter-spacing:-0.170px;">0,45100</div>
<div class="t" style="left:834.40px;top:202.00px;width:56.80px;text-align:right;letter-spacing:-0.170px;">220,32</div>
<div class="t" style="left:895.60px;top:202.00px;width:56.90px;text-align:right;letter-spacing:-0.170px;">1,0000</div>
<div class="t" style="left:956.90px;top:202.00px;width:56.80px;text-align:right;letter-spacing:-0.170px;">2,0000</div>
<div class="t" style="left:231.00px;top:214.00px;letter-spacing:-0.100px;">12</div>
<div class="t" style="left:255.30px;top:214.00px;letter-spacing:-0.253px;">№ 901, 10.05.2012</div>
<div class="t" style="left:408.80px;top:214.00px;letter-spacing:-0.285px;">124381702101001...</div>
<div class="t" style="left:470.00px;top:214.00px;letter-spacing:-0.020px;">Производствен...</div>
<div class="t" style="left:528.10px;top:214.00px;width:56.90px;text-align:right;letter-spacing:-0.170px;">4</div>
<div class="t" style="left:589.40px;top:214.00px;width:56.80px;text-align:right;letter-spacing:-0.170px;">0,65160</div>
<div class="t" style="left:650.60px;top:214.00px;width:56.90px;text-align:right;letter-spacing:-0.170px;">0,00000</div>
<div class="t" style="left:711.90px;top:214.00px;width:56.80px;text-align:right;letter-spacing:-0.170px;">0,78</div>
<div class="t" style="left:773.10px;top:214.00px;width:56.90px;text-align:right;letter-spacing:-0.170px;">0,65160</div>
<div class="t" style="left:834.40px;top:214.00px;width:56.80px;text-align:right;letter-spacing:-0.170px;">220,32</div>
<div class="t" style="left:895.60px;top:214.00px;width:56.90px;text-align:right;letter-spacing:-0.170px;">1,0000</div>
<div class="t" style="left:956.90px;top:214.00px;width:56.80px;text-align:right;letter-spacing:-0.170px;">2,0000</div>
<div class="t" style="left:231.00px;top:226.00px;letter-spacing:-0.100px;">13</div>
<div class="t" style="left:255.30px;top:226.00px;letter-spacing:-0.300px;">796, 19.06.2015</div>
<div class="t" style="left:408.80px;top:226.00px;letter-spacing:-0.285px;">124382502101000...</div>
<div class="t" style="left:470.00px;top:226.00px;letter-spacing:-0.020px;">Жилая многокв...</div>
<div class="t" style="left:528.10px;top:226.00px;width:56.90px;text-align:right;letter-spacing:-0.170px;">2</div>
<div class="t" style="left:589.40px;top:226.00px;width:56.80px;text-align:right;letter-spacing:-0.170px;">0,41610</div>
<div class="t" style="left:650.60px;top:226.00px;width:56.90px;text-align:right;letter-spacing:-0.170px;">0,00000</div>
<div class="t" style="left:711.90px;top:226.00px;width:56.80px;text-align:right;letter-spacing:-0.170px;">5,24</div>
<div class="t" style="left:773.10px;top:226.00px;width:56.90px;text-align:right;letter-spacing:-0.170px;">0,41610</div>
<div class="t" style="left:834.40px;top:226.00px;width:56.80px;text-align:right;letter-spacing:-0.170px;">14,71</div>
<div class="t" style="left:895.60px;top:226.00px;width:56.90px;text-align:right;letter-spacing:-0.170px;">1,0000</div>
<div class="t" style="left:956.90px;top:226.00px;width:56.80px;text-align:right;letter-spacing:-0.170px;">2,0000</div>
<div class="t" style="left:231.00px;top:238.00px;letter-spacing:-0.100px;">14</div>
<div class="t" style="left:255.30px;top:238.00px;letter-spacing:-0.137px;">б/н, 04.08.2005</div>
<div class="t" style="left:408.80px;top:238.00px;letter-spacing:-0.285px;">124385507601000...</div>
<div class="t" style="left:470.00px;top:238.00px;letter-spacing:-0.020px;">Общественно-д...</div>
<div class="t" style="left:528.10px;top:238.00px;width:56.90px;text-align:right;letter-spacing:-0.170px;">2</div>
<div class="t" style="left:589.40px;top:238.00px;width:56.80px;text-align:right;letter-spacing:-0.170px;">0,60180</div>
<div class="t" style="left:650.60px;top:238.00px;width:56.90px;text-align:right;letter-spacing:-0.170px;">0,00000</div>
<div class="t" style="left:711.90px;top:238.00px;width:56.80px;text-align:right;letter-spacing:-0.170px;">1,92</div>
<div class="t" style="left:773.10px;top:238.00px;width:56.90px;text-align:right;letter-spacing:-0.170px;">0,60180</div>
<div class="t" style="left:834.40px;top:238.00px;width:56.80px;text-align:right;letter-spacing:-0.170px;">220,32</div>
<div class="t" style="left:895.60px;top:238.00px;width:56.90px;text-align:right;letter-spacing:-0.170px;">1,0000</div>
<div class="t" style="left:956.90px;top:238.00px;width:56.80px;text-align:right;letter-spacing:-0.170px;">2,0000</div>
<div class="t" style="left:231.00px;top:250.00px;letter-spacing:-0.100px;">15</div>
<div class="t" style="left:255.30px;top:250.00px;letter-spacing:-0.284px;">1228, 26.09.2007</div>
<div class="t" style="left:408.80px;top:250.00px;letter-spacing:-0.285px;">124385507601000...</div>
<div class="t" style="left:470.00px;top:250.00px;letter-spacing:-0.020px;">Общественно-д...</div>
<div class="t" style="left:528.10px;top:250.00px;width:56.90px;text-align:right;letter-spacing:-0.170px;">2</div>
<div class="t" style="left:589.40px;top:250.00px;width:56.80px;text-align:right;letter-spacing:-0.170px;">0,01400</div>
<div class="t" style="left:650.60px;top:250.00px;width:56.90px;text-align:right;letter-spacing:-0.170px;">0,00000</div>
<div class="t" style="left:711.90px;top:250.00px;width:56.80px;text-align:right;letter-spacing:-0.170px;">1,92</div>
<div class="t" style="left:773.10px;top:250.00px;width:56.90px;text-align:right;letter-spacing:-0.170px;">0,01400</div>
<div class="t" style="left:834.40px;top:250.00px;width:56.80px;text-align:right;letter-spacing:-0.170px;">220,32</div>
<div class="t" style="left:895.60px;top:250.00px;width:56.90px;text-align:right;letter-spacing:-0.170px;">1,0000</div>
<div class="t" style="left:956.90px;top:250.00px;width:56.80px;text-align:right;letter-spacing:-0.170px;">2,0000</div>
<div class="t" style="left:231.00px;top:262.00px;letter-spacing:-0.100px;">16</div>
<div class="t" style="left:255.30px;top:262.00px;letter-spacing:-0.269px;">№1229, 26.08.2016</div>
<div class="t" style="left:408.80px;top:262.00px;letter-spacing:-0.285px;">124385510101000...</div>
<div class="t" style="left:470.00px;top:262.00px;letter-spacing:-0.020px;">Производствен...</div>
<div class="t" style="left:528.10px;top:262.00px;width:56.90px;text-align:right;letter-spacing:-0.170px;">4</div>
<div class="t" style="left:589.40px;top:262.00px;width:56.80px;text-align:right;letter-spacing:-0.170px;">4,43770</div>
<div class="t" style="left:650.60px;top:262.00px;width:56.90px;text-align:right;letter-spacing:-0.170px;">0,00000</div>
<div class="t" style="left:711.90px;top:262.00px;width:56.80px;text-align:right;letter-spacing:-0.170px;">5,16</div>
<div class="t" style="left:773.10px;top:262.00px;width:56.90px;text-align:right;letter-spacing:-0.170px;">228 985,32</div>
<div class="t" style="left:834.40px;top:262.00px;width:56.80px;text-align:right;letter-spacing:-0.170px;">0,01100</div>
<div class="t" style="left:895.60px;top:262.00px;width:56.90px;text-align:right;letter-spacing:-0.170px;">1,0000</div>
<div class="t" style="left:956.90px;top:262.00px;width:56.80px;text-align:right;letter-spacing:-0.170px;">2,0000</div>
<div class="t" style="left:230.00px;top:275.00px;letter-spacing:0.030px;">Всего земельного налога, подлежащего уплате</div>
<div class="t" style="left:407.20px;top:275.00px;">X</div>
<div class="t" style="left:468.50px;top:275.00px;">X</div>
<div class="t" style="left:529.70px;top:275.00px;">X</div>
<div class="t" style="left:591.00px;top:275.00px;">X</div>
<div class="t" style="left:652.20px;top:275.00px;">X</div>
<div class="t" style="left:713.50px;top:275.00px;">X</div>
<div class="t" style="left:774.70px;top:275.00px;">X</div>
<div class="t" style="left:836.00px;top:275.00px;">X</div>
<div class="t" style="left:897.20px;top:275.00px;">X</div>
<div class="t" style="left:958.50px;top:275.00px;">X</div>
<div class="t" style="left:1019.70px;top:275.00px;">X</div>
<div class="t" style="left:230.00px;top:285.00px;letter-spacing:0.030px;">В том числе к доплате (уменьшению):</div>
<div class="t" style="left:407.20px;top:285.00px;">X</div>
<div class="t" style="left:468.50px;top:285.00px;">X</div>
<div class="t" style="left:529.70px;top:285.00px;">X</div>
<div class="t" style="left:591.00px;top:285.00px;">X</div>
<div class="t" style="left:652.20px;top:285.00px;">X</div>
<div class="t" style="left:713.50px;top:285.00px;">X</div>
<div class="t" style="left:774.70px;top:285.00px;">X</div>
<div class="t" style="left:836.00px;top:285.00px;">X</div>
<div class="t" style="left:897.20px;top:285.00px;">X</div>
<div class="t" style="left:958.50px;top:285.00px;">X</div>
<div class="t" style="left:1019.70px;top:285.00px;">X</div>
<div class="t" style="left:230.00px;top:294.00px;letter-spacing:0.030px;">По акту проверки</div>
<div class="t" style="left:407.20px;top:294.00px;">X</div>
<div class="t" style="left:468.50px;top:294.00px;">X</div>
<div class="t" style="left:529.70px;top:294.00px;">X</div>
<div class="t" style="left:591.00px;top:294.00px;">X</div>
<div class="t" style="left:652.20px;top:294.00px;">X</div>
<div class="t" style="left:713.50px;top:294.00px;">X</div>
<div class="t" style="left:774.70px;top:294.00px;">X</div>
<div class="t" style="left:836.00px;top:294.00px;">X</div>
<div class="t" style="left:897.20px;top:294.00px;">X</div>
<div class="t" style="left:958.50px;top:294.00px;">X</div>
<div class="t" style="left:1019.70px;top:294.00px;">X</div>
<div class="t" style="left:230.00px;top:304.00px;letter-spacing:0.021px;">В соответствии с пунктом 6 статьи 33 Налогового кодекса</div>
<div class="t" style="left:230.00px;top:312.00px;letter-spacing:0.030px;">Республики Беларусь</div>
<div class="t" style="left:407.20px;top:304.00px;">X</div>
<div class="t" style="left:468.50px;top:304.00px;">X</div>
<div class="t" style="left:529.70px;top:304.00px;">X</div>
<div class="t" style="left:591.00px;top:304.00px;">X</div>
<div class="t" style="left:652.20px;top:304.00px;">X</div>
<div class="t" style="left:713.50px;top:304.00px;">X</div>
<div class="t" style="left:774.70px;top:304.00px;">X</div>
<div class="t" style="left:836.00px;top:304.00px;">X</div>
<div class="t" style="left:897.20px;top:304.00px;">X</div>
<div class="t" style="left:958.50px;top:304.00px;">X</div>
<div class="t" style="left:1019.70px;top:304.00px;">X</div>
<div class="t" style="left:230.00px;top:322.00px;letter-spacing:0.021px;">В соответствии с пунктом 6 статьи 73 Налогового кодекса</div>
<div class="t" style="left:230.00px;top:330.00px;letter-spacing:0.030px;">Республики Беларусь</div>
<div class="t" style="left:407.20px;top:322.00px;">X</div>
<div class="t" style="left:468.50px;top:322.00px;">X</div>
<div class="t" style="left:529.70px;top:322.00px;">X</div>
<div class="t" style="left:591.00px;top:322.00px;">X</div>
<div class="t" style="left:652.20px;top:322.00px;">X</div>
<div class="t" style="left:713.50px;top:322.00px;">X</div>
<div class="t" style="left:774.70px;top:322.00px;">X</div>
<div class="t" style="left:836.00px;top:322.00px;">X</div>
<div class="t" style="left:897.20px;top:322.00px;">X</div>
<div class="t" style="left:958.50px;top:322.00px;">X</div>
<div class="t" style="left:1019.70px;top:322.00px;">X</div>
<div class="t" style="left:230.00px;top:339.00px;letter-spacing:0.021px;">В соответствии с пунктом 8 статьи 73 Налогового кодекса</div>
<div class="t" style="left:230.00px;top:348.00px;letter-spacing:0.030px;">Республики Беларусь</div>
<div class="t" style="left:407.20px;top:339.00px;">X</div>
<div class="t" style="left:468.50px;top:339.00px;">X</div>
<div class="t" style="left:529.70px;top:339.00px;">X</div>
<div class="t" style="left:591.00px;top:339.00px;">X</div>
<div class="t" style="left:652.20px;top:339.00px;">X</div>
<div class="t" style="left:713.50px;top:339.00px;">X</div>
<div class="t" style="left:774.70px;top:339.00px;">X</div>
<div class="t" style="left:836.00px;top:339.00px;">X</div>
<div class="t" style="left:897.20px;top:339.00px;">X</div>
<div class="t" style="left:958.50px;top:339.00px;">X</div>
<div class="t" style="left:1019.70px;top:339.00px;">X</div>
<svg class="b" style="left:229px;top:363.6px" width="7.6" height="7.6" viewBox="0 0 7.6 7.6"><path d="M2.5 0.4h2.5v2.2h2.2v2.5h-2.2v2.2h-2.5v-2.2h-2.2v-2.5h2.2z" fill="#62ad3c"/><path d="M3.1 1.2h1.3v2h2v1.3h-2v2h-1.3v-2h-2v-1.3h2z" fill="#a6d247"/></svg>
<svg class="b" style="left:241px;top:362.8px" width="8.4" height="8.6" viewBox="0 0 8.4 8.6"><path d="M0.8 1.6l1.2-1.1h3.6l2 2v5.4h-6.8z" fill="#f7f1dc" stroke="#d2bd84" stroke-width="0.7"/><rect x="2.4" y="2.4" width="3.6" height="4.2" fill="#a9c1e8"/><path d="M1.2 2.6L4.6 6" stroke="#e6c46a" stroke-width="1"/><rect x="4" y="5.4" width="1.4" height="1.2" fill="#2c3248"/></svg>
<svg class="b" style="left:254.6px;top:365.4px" width="7.4" height="4" viewBox="0 0 7.4 4"><rect x="0.6" y="0.8" width="6" height="2.2" rx="0.3" fill="#b4d048" stroke="#6cb25c" stroke-width="0.7"/></svg>
<svg class="b" style="left:265.5px;top:362.5px" width="10" height="10" viewBox="0 0 10 10"><circle cx="3.8" cy="3.6" r="2.9" fill="#f5f8fc" stroke="#c9c4b2" stroke-width="0.8"/><circle cx="3.5" cy="3.3" r="1.4" fill="#fff"/><path d="M6.2 6.2L8.0 8.0" stroke="#87484a" stroke-width="1.2" stroke-linecap="round"/></svg>
<div class="b " style="left:215.6px;top:397.5px;width:35.6px;height:0.9px;background:#8c8c8c;"></div>
<div class="t" style="left:216.00px;top:399.00px;letter-spacing:0.072px;">* Заполняется плательщиком самостоятельно.</div>
<div class="b " style="left:215.6px;top:416.5px;width:82px;height:0.9px;background:#8c8c8c;"></div>
<div class="t" style="left:216.00px;top:418.00px;letter-spacing:0.120px;">Ctrl+C - копировать строку</div>
<div class="t" style="left:216.00px;top:426.00px;letter-spacing:0.042px;">Ctrl+V - вставить строку</div>
<div class="b " style="left:210px;top:445.6px;width:814px;height:8.4px;background:#f0f0f0;"></div>
<div class="b " style="left:220.2px;top:445.7px;width:448.3px;height:8.1px;background:#cacaca;"></div>
<svg class="b" style="left:212px;top:446.2px" width="6" height="7" viewBox="0 0 6 7"><path d="M4.4 1.1L1.9 3.5L4.4 5.9" fill="none" stroke="#3c3c3c" stroke-width="1.1"/></svg>
<svg class="b" style="left:1021.6px;top:446.5px" width="6" height="7" viewBox="0 0 6 7"><path d="M2 1L4.4 3.5L2 6" fill="none" stroke="#555" stroke-width="0.8"/></svg>
<div class="b " style="left:210px;top:453.8px;width:814px;height:11.4px;background:#f0f0f0;"></div>
<div class="b " style="left:210px;top:453.85px;width:814px;height:0.85px;background:#c4c4c4;"></div>
<div class="b " style="left:211.2px;top:454.7px;width:35.20000000000002px;height:9.7px;background:#f3f3f3;"></div>
<div class="t" style="left:211.20px;top:455.00px;width:35.20px;text-align:center;letter-spacing:-0.020px;">Заголовок</div>
<div class="b " style="left:246.4px;top:454.7px;width:24.099999999999994px;height:9.7px;background:#fff;"></div>
<div class="t" style="left:246.40px;top:455.00px;width:24.10px;text-align:center;letter-spacing:-0.020px;">Часть I</div>
<div class="b " style="left:270.5px;top:454.7px;width:26.0px;height:9.7px;background:#f3f3f3;"></div>
<div class="t" style="left:270.50px;top:455.00px;width:26.00px;text-align:center;letter-spacing:-0.020px;">Часть II</div>
<div class="b " style="left:296.5px;top:454.7px;width:27.80000000000001px;height:9.7px;background:#f3f3f3;"></div>
<div class="t" style="left:296.50px;top:455.00px;width:27.80px;text-align:center;letter-spacing:-0.020px;">Часть III</div>
<div class="b " style="left:324.3px;top:454.7px;width:42.80000000000001px;height:9.7px;background:#f3f3f3;"></div>
<div class="t" style="left:324.30px;top:455.00px;width:42.80px;text-align:center;letter-spacing:-0.020px;">Приложение</div>
<div class="b " style="left:245.9px;top:454.7px;width:1px;height:9.7px;background:#cfcfcf;"></div>
<div class="b " style="left:270.0px;top:454.7px;width:1px;height:9.7px;background:#cfcfcf;"></div>
<div class="b " style="left:296.0px;top:454.7px;width:1px;height:9.7px;background:#cfcfcf;"></div>
<div class="b " style="left:323.8px;top:454.7px;width:1px;height:9.7px;background:#cfcfcf;"></div>
<div class="b " style="left:366.6px;top:454.7px;width:1px;height:9.7px;background:#cfcfcf;"></div>
<div class="b " style="left:210px;top:464.3px;width:814px;height:0.7px;background:#d2d6dc;"></div>
<div class="b " style="left:210px;top:465.2px;width:814px;height:1.35px;background:#a3b9d8;"></div>
<div class="b " style="left:209px;top:467.9px;width:830px;height:80px;border:0.9px solid #bcbcbc;border-radius:3px 0 0 0;background:#fff;"></div>
<div class="b " style="left:209.9px;top:468.8px;width:830px;height:13.6px;background:linear-gradient(#f0f0f0 0,#f0f0f0 88%,#cfcfcf 100%);border-bottom:0.6px solid #c6c6c6;"></div>
<svg class="b" style="left:211.8px;top:470.5px" width="8" height="9" viewBox="0 0 8 9"><path d="M0.5 0.5h4.6l1.9 1.9v5.6h-6.5z" fill="#fff" stroke="#b4b4b4" stroke-width="0.6"/><circle cx="3.3" cy="2.6" r="1.2" fill="#e0402a"/><path d="M1.6 6.8c0-2.4 3.4-2.4 3.4 0z" fill="#f0a030"/></svg>
<div class="t" style="left:222.10px;top:471.00px;letter-spacing:-0.014px;">Предварительная камеральная проверка</div>
<svg class="b" style="left:347.3px;top:468.8px" width="74" height="13.2" viewBox="0 0 74 13.2"><path d="M0 13.2V3Q0 0 3 0H52C58 0 62 12.4 71 12.4L74 13.2Z" fill="#fff"/><path d="M0.3 13V3Q0.3 0.3 3 0.3H52C58 0.3 62 12.6 71 12.6" fill="none" stroke="#b9b9b9" stroke-width="0.7"/></svg>
<svg class="b" style="left:351.5px;top:471px" width="7" height="8" viewBox="0 0 7 8"><path d="M0.5 0.5h3.6l1.9 1.9v5.1h-5.5z" fill="#f4f6fb" stroke="#a8b4cc" stroke-width="0.6"/><path d="M1.6 3.4h2.8M1.6 4.8h2.8M1.6 6.1h2.8" stroke="#8aa0c8" stroke-width="0.4"/></svg>
<div class="t" style="left:361.20px;top:471.00px;letter-spacing:0.005px;">Подсказки</div>
<svg class="b" style="left:395.6px;top:471.3px" width="7.4" height="7.4" viewBox="0 0 7.4 7.4"><path d="M1.6 2L5.6 6M5.6 2L1.6 6" stroke="#8c8c8c" stroke-width="1.7" stroke-linecap="square" fill="none"/><path d="M1.6 2L5.6 6M5.6 2L1.6 6" stroke="#fff" stroke-width="0.8" stroke-linecap="square" fill="none"/></svg>
<svg class="b" style="left:1020.4px;top:470.6px" width="8" height="4" viewBox="0 0 8 4"><rect x="0.8" y="0.8" width="5.4" height="1.8" fill="#fff" stroke="#7c7c7c" stroke-width="0.7"/></svg>
</div></body></html>
